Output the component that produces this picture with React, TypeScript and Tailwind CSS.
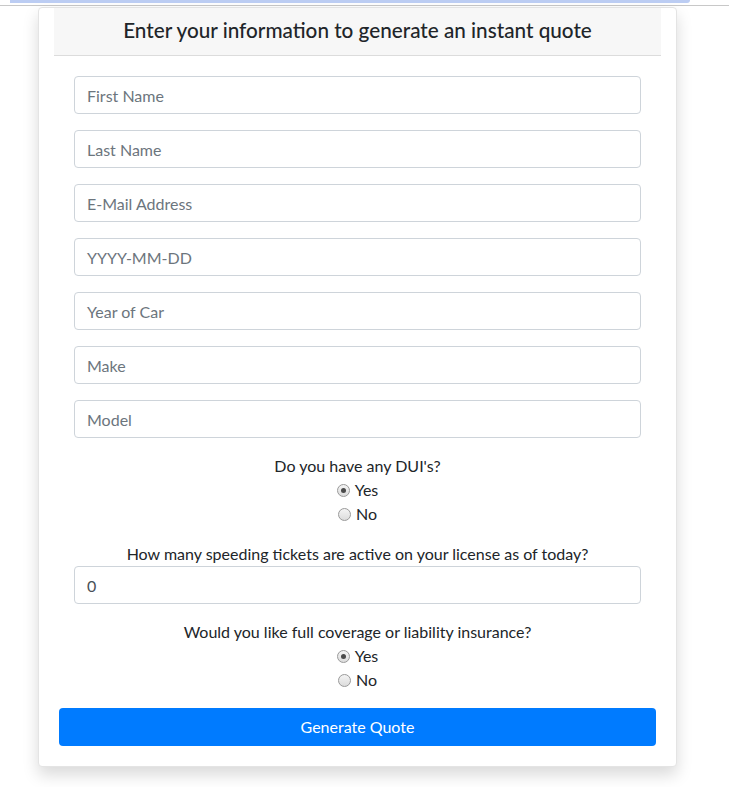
import React from "react";

const fields = ["First Name", "Last Name", "E-Mail Address", "YYYY-MM-DD", "Year of Car", "Make", "Model"];

function Radio({ label, checked }: { label: string; checked?: boolean }) {
  return (
    <label className="flex items-center justify-center gap-[5px] h-6 text-[16px] text-[#212529]">
      <span className="w-[13px] h-[13px] rounded-full border border-[#9a9a9a] bg-gradient-to-b from-[#f4f4f4] to-[#dcdcdc] flex items-center justify-center">
        {checked && <span className="w-[5px] h-[5px] rounded-full bg-[#4a4a4a]" />}
      </span>
      <span>{label}</span>
    </label>
  );
}

function Field({ placeholder, value }: { placeholder?: string; value?: string }) {
  return (
    <div className="h-[38px] w-full rounded-[4px] border border-[#ced4da] bg-white px-3 pt-px flex items-center text-[16px]">
      {value ? (
        <span className="text-[#495057]">{value}</span>
      ) : (
        <span className="text-[#6c757d]">{placeholder}</span>
      )}
    </div>
  );
}

export default function App() {
  return (
    <div className="min-h-[787px] bg-white" style={{ fontFamily: "Lato, 'Liberation Sans', sans-serif" }}>
      <div className="h-[6px] border-b border-[#c8c8c8] flex">
        <div className="ml-[10px] w-[680px] h-[3px] bg-[#bccdf3] rounded-br-[6px]" />
      </div>
      <div className="ml-[38px] mt-px w-[639px] rounded-[4px] border border-[#e4e4e4] bg-white shadow-[0_8px_16px_rgba(0,0,0,0.15)]">
        <div className="mx-[15px] h-12 pb-[2px] bg-[#f7f7f7] border-b border-[#dcdcdc] flex items-center justify-center">
          <h5 className="text-[20.7px] font-medium text-[#212529]">Enter your information to generate an instant quote</h5>
        </div>
        <form className="pt-5 pb-5 flex flex-col">
          <div className="px-[35px] flex flex-col gap-4">
            {fields.map((f) => (
              <Field key={f} placeholder={f} />
            ))}
          </div>
          <div className="mt-4 text-center text-[16px] text-[#212529] leading-6">Do you have any DUI's?</div>
          <Radio label="Yes" checked />
          <Radio label="No" />
          <div className="mt-4 text-center text-[16px] text-[#212529] leading-6">
            How many speeding tickets are active on your license as of today?
          </div>
          <div className="px-[35px]">
            <Field value="0" />
          </div>
          <div className="mt-4 text-center text-[16px] text-[#212529] leading-6">
            Would you like full coverage or liability insurance?
          </div>
          <Radio label="Yes" checked />
          <Radio label="No" />
          <div className="px-5 mt-4">
            <button type="button" className="w-full h-[38px] rounded-[4px] bg-[#007bff] text-white text-[16px]">
              Generate Quote
            </button>
          </div>
        </form>
      </div>
    </div>
  );
}
